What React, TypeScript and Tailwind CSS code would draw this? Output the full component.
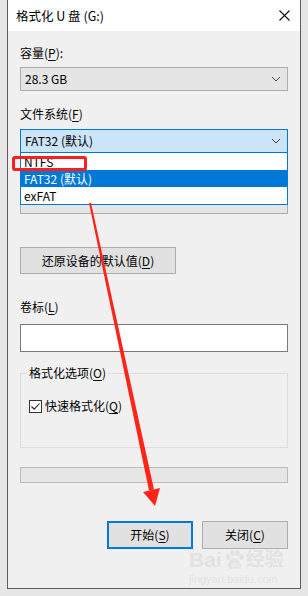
import React from 'react';

const Key: React.FC<{ k: string }> = ({ k }) => <span className="underline underline-offset-2 decoration-1">{k}</span>;

const Chevron = () => (
  <svg width="10" height="6" viewBox="0 0 10 6" className="shrink-0">
    <path d="M1 1 L5 5 L9 1" fill="none" stroke="#444" strokeWidth="1" />
  </svg>
);

export default function App() {
  return (
    <div className="relative w-[308px] h-[596px] overflow-hidden bg-[#e6e6e6] text-[12px] text-black font-['Noto_Sans_CJK_SC','Noto_Sans',sans-serif]">
      <div className="ml-[7px] w-[294px] h-[589px] flex flex-col border-x border-b border-[#5c5c5c] bg-[#f0f0f0]">
        {/* 标题栏 */}
        <div className="h-[31px] bg-white flex items-center justify-between pl-[8px] pr-[10px] shrink-0">
          <span className="leading-[16px] text-[12.5px]">格式化 U 盘 (G:)</span>
          <svg width="11" height="11" viewBox="0 0 11 11">
            <path d="M0.5 0.5 L10.5 10.5 M10.5 0.5 L0.5 10.5" stroke="#111" strokeWidth="1.1" />
          </svg>
        </div>

        <div className="flex flex-col px-[12px]">
          <div className="mt-[14px] leading-[16px]">容量(<Key k="P" />):</div>
          <div className="mt-[6px] h-[24px] flex items-center justify-between pl-[4px] pr-[6px] bg-[#e5e5e5] border border-[#adadad]">
            <span>28.3 GB</span>
            <Chevron />
          </div>

          <div className="mt-[15px] leading-[16px]">文件系统(<Key k="F" />)</div>
          <div className="relative mt-[7px]">
            <div className="h-[24px] flex items-center justify-between pl-[4px] pr-[6px] bg-[#cce4f7] border border-[#0078d7]">
              <span>FAT32 (默认)</span>
              <Chevron />
            </div>
            {/* 下拉列表 */}
            <div className="absolute left-0 right-0 top-full z-10 bg-white border-x border-b border-[#0078d7] flex flex-col">
              <div className="h-[17px] flex items-center pl-[3px]">NTFS</div>
              <div className="h-[17px] flex items-center pl-[3px] bg-[#0078d7] text-white">FAT32 (默认)</div>
              <div className="h-[17px] flex items-center pl-[3px]">exFAT</div>
            </div>
          </div>

          {/* 被列表遮住的分配单元大小 */}
          <div className="mt-[15px] h-[16px]" />
          <div className="mt-[6px] h-[24px] bg-[#e5e5e5] border border-[#adadad]" />

          <div className="mt-[33px] w-[156px] h-[27px] flex items-center justify-center bg-[#e1e1e1] border border-[#adadad]">
            还原设备的默认值(<Key k="D" />)
          </div>

          <div className="mt-[25px] leading-[16px]">卷标(<Key k="L" />)</div>
          <div className="mt-[9px] h-[28px] bg-white border border-[#7a7a7a]" />

          {/* 格式化选项 */}
          <div className="relative mt-[21px] h-[75px] border border-[#dcdcdc] pl-[8px] pt-[24px]">
            <div className="absolute -top-[9px] left-[6px] px-[2px] bg-[#f0f0f0] leading-[16px]">格式化选项(<Key k="O" />)</div>
            <div className="flex items-center gap-[3px]">
              <div className="w-[13px] h-[13px] bg-white border border-[#333] flex items-center justify-center">
                <svg width="11" height="11" viewBox="0 0 11 11">
                  <path d="M1.5 5.5 L4.2 8.2 L9.5 2.5" fill="none" stroke="#222" strokeWidth="1.1" />
                </svg>
              </div>
              <span className="leading-[16px]">快速格式化(<Key k="Q" />)</span>
            </div>
          </div>

          <div className="mt-[19px] h-[16px] bg-[#e6e6e6] border border-[#bcbcbc]" />

          <div className="mt-[38px] flex justify-end gap-[9px]">
            <div className="w-[86px] h-[28px] flex items-center justify-center bg-[#e1e1e1] border-2 border-[#0078d7]">
              开始(<Key k="S" />)
            </div>
            <div className="w-[86px] h-[28px] flex items-center justify-center bg-[#e1e1e1] border border-[#adadad]">
              关闭(<Key k="C" />)
            </div>
          </div>
        </div>
      </div>

      {/* 红色标注框 */}
      <div className="absolute left-[12px] top-[156px] w-[75px] h-[15px] border-[3px] border-[#fa2020] rounded-[3px] z-20" />

      {/* 红色箭头 */}
      <svg className="absolute inset-0 z-20 pointer-events-none" width="308" height="596" viewBox="0 0 308 596">
        <polygon points="89,203.2 91,202.8 154,489.5 149,490.5" fill="#ff2419" />
        <polygon points="143,492 160,488 155,506" fill="#ff2419" />
      </svg>

      {/* 百度经验水印 */}
      <div className="absolute left-[189px] top-[549px] z-20 flex flex-col items-start text-[#e2e2e2] pointer-events-none">
        <div className="flex items-center leading-[22px] text-[21px] font-bold font-['Liberation_Sans','Noto_Sans_CJK_SC',sans-serif]">
          <span>Bai</span>
          <svg width="22" height="22" viewBox="0 0 22 22" className="mx-[1px]">
            <g fill="#e2e2e2">
              <ellipse cx="5" cy="8" rx="2.3" ry="3" />
              <ellipse cx="9.5" cy="4" rx="2.3" ry="3" />
              <ellipse cx="14.5" cy="4" rx="2.3" ry="3" />
              <ellipse cx="18.5" cy="8" rx="2.3" ry="3" />
              <path d="M11.5 9 C8 9 5 14 5 17 C5 20 8 20.5 11.5 19.5 C15 20.5 18 20 18 17 C18 14 15 9 11.5 9 Z" />
            </g>
            <text x="8" y="18" fontSize="7" fill="#f0f0f0" fontFamily="Liberation Sans">du</text>
          </svg>
          <span className="text-[19px]">经验</span>
        </div>
        <div className="text-[11px] leading-[12px] mt-[2px] font-['Liberation_Sans',sans-serif]">jingyan.baidu.com</div>
      </div>
    </div>
  );
}
